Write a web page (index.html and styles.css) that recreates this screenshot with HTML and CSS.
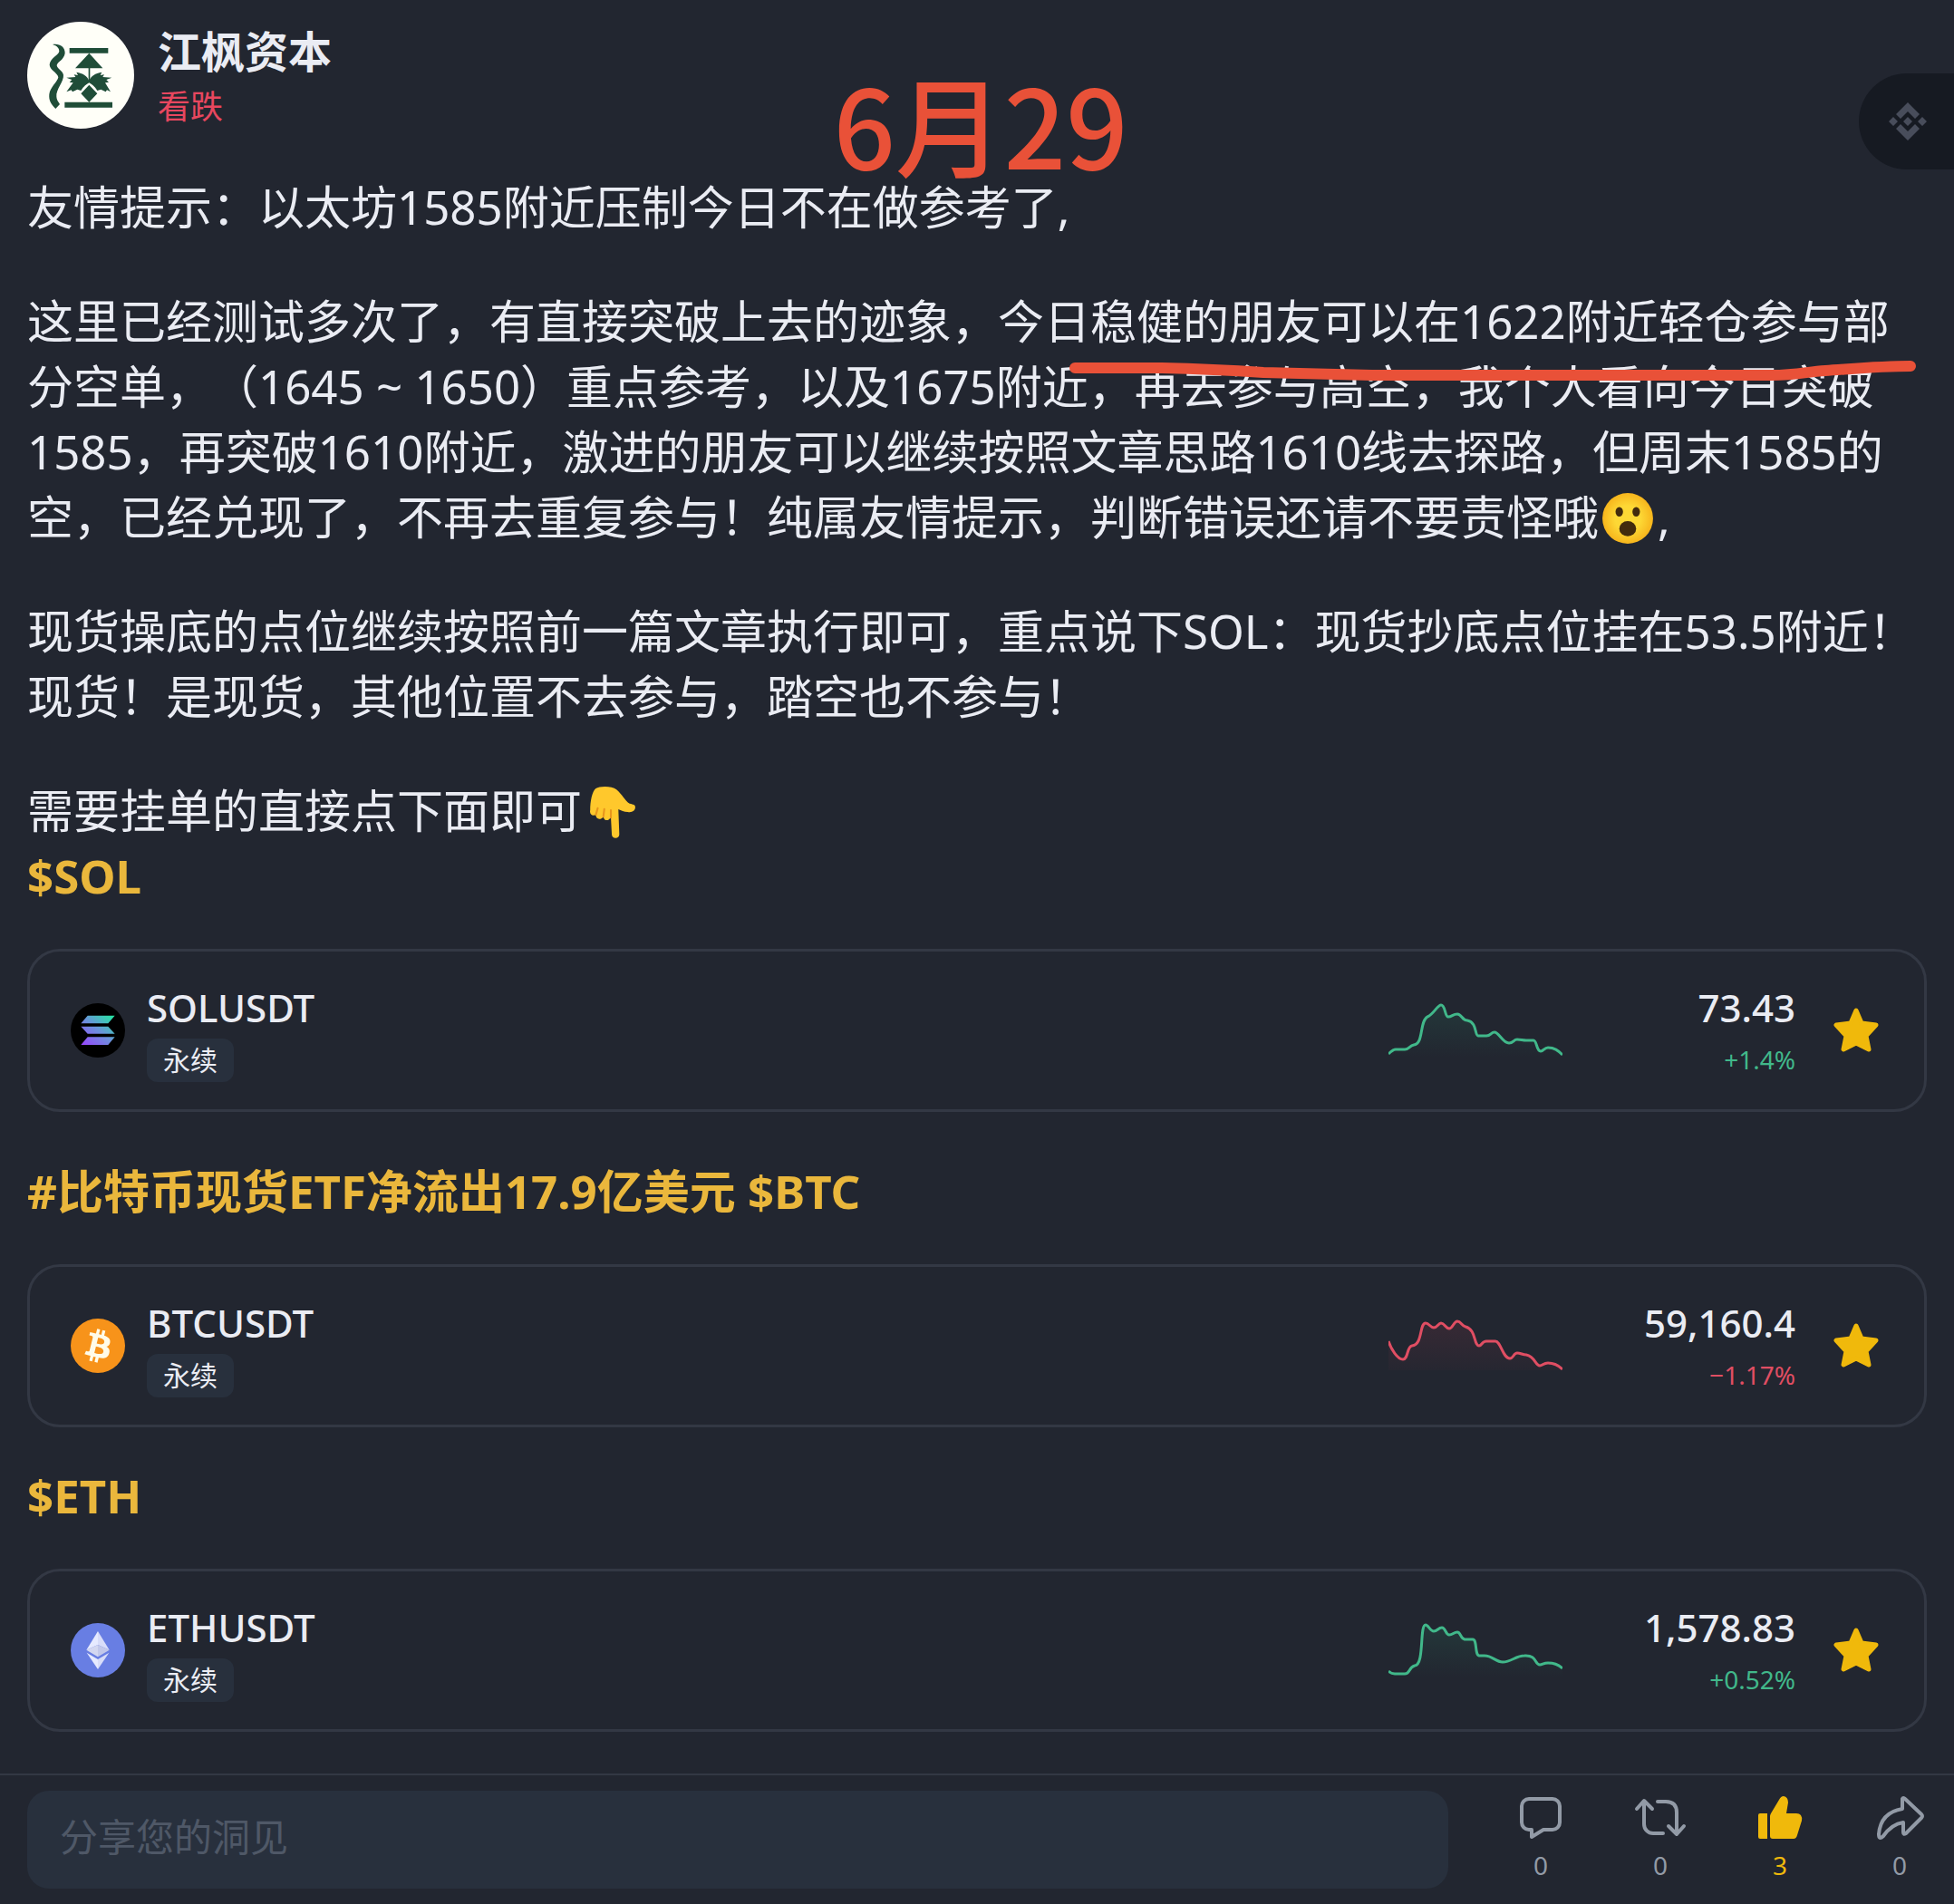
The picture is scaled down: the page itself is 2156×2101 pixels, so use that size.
FILE: index.html
```html
<!DOCTYPE html>
<html lang="zh-CN">
<head>
    <meta charset="UTF-8">
    <meta name="viewport" content="width=device-width, initial-scale=1.0">
    <title>江枫资本</title>
    <link rel="stylesheet" href="styles.css">
</head>
<body>
    <main class="post">
        <header class="author">
            <svg class="avatar" viewBox="0 0 354 354" aria-hidden="true">
                <circle cx="177" cy="177" r="177" fill="#fffff8"/>
                <g fill="#1f4d38">
                    <path d="M84 75C105 71 126 82 125 104C122 126 100 132 98 144C98 155 118 162 120 176C122 198 94 224 97 248C98 262 108 270 108 273L94 288C80 274 71 262 73 240C76 216 100 200 103 184C100 168 74 160 74 142C76 120 104 110 106 98C106 86 98 80 84 75Z"/>
                    <path d="M140 87H268V104H140ZM124 266H282V284H124ZM205 104L250 154H159ZM203 150H208V200H203ZM205 209L232 238L205 266L178 238Z"/>
                    <path d="M205 196C200 180 184 170 163 167L168 177L155 175L160 183L130 185L148 192L140 200L152 202L130 232L146 226L150 232L166 224L178 228C186 214 198 206 205 202C212 206 224 214 232 228L244 224L260 232L264 226L276 232L258 202L270 200L262 192L280 185L250 183L255 175L242 177L247 167C226 170 210 180 205 196Z"/>
                </g>
            </svg>
            <div class="author-info">
                <h1 class="author-name">江枫资本</h1>
                <p class="sentiment">看跌</p>
            </div>
        </header>

        <div class="date-mark">6月29</div>

        <a class="float-button" href="#" aria-label="Binance">
            <svg viewBox="0 0 42 42" aria-hidden="true">
                <path d="M21 0L34 13L29 18L21 10L13 18L8 13ZM21 42L8 29L13 24L21 32L29 24L34 29ZM21 16L26 21L21 26L16 21ZM5 16L10 21L5 26L0 21ZM37 16L42 21L37 26L32 21Z" fill="#484d5b"/>
            </svg>
        </a>

        <div class="post-text">
            <p>友情提示：以太坊1585附近压制今日不在做参考了,</p>
            <div class="marked">
                <p>这里已经测试多次了，有直接突破上去的迹象，今日稳健的朋友可以在1622附近轻仓参与部分空单，（1645 ~ 1650）重点参考，以及1675附近，再去参与高空，我个人看向今日突破1585，再突破1610附近，激进的朋友可以继续按照文章思路1610线去探路，但周末1585的空，已经兑现了，不再去重复参与！纯属友情提示，判断错误还请不要责怪哦<svg class="emoji" viewBox="0 0 56 56" role="img" aria-label="惊讶"><defs><radialGradient id="face"><stop offset="0.5" stop-color="#fdd835"/><stop offset="1" stop-color="#f7b51c"/></radialGradient></defs><circle cx="28" cy="28" r="27" fill="url(#face)"/><ellipse cx="19" cy="21" rx="4" ry="5" fill="#422b0d"/><ellipse cx="37" cy="21" rx="4" ry="5" fill="#422b0d"/><ellipse cx="28" cy="39" rx="9" ry="8" fill="#422b0d"/></svg>,</p>
                <svg class="underline" viewBox="0 0 952 32" aria-hidden="true">
                    <path d="M12 13L108 13C150 14 190 16 220 18L340 21H780C810 21 820 17 840 16C870 14 900 11 934 11" fill="none" stroke="#e95138" stroke-width="12" stroke-linecap="round" stroke-linejoin="round"/>
                </svg>
            </div>
            <p>现货操底的点位继续按照前一篇文章执行即可，重点说下SOL：现货抄底点位挂在53.5附近！现货！是现货，其他位置不去参与，踏空也不参与！</p>
            <p>需要挂单的直接点下面即可<svg class="emoji" viewBox="0 0 56 56" role="img" aria-label="下指"><path d="M12 3C16 0 29 0 34 4C40 9 43 16 48 19C52 20 54 20 54 23C54 27 50 29 46 28C42 28 39 26 36 25L37 52C37 57 29 57 29 52L28 33C26 38 21 38 20 33C17 37 12 36 12 31C8 33 5 30 6 26C6 17 8 6 12 3Z" fill="#ffc82c"/><path d="M12 31L14 24M20 33L21 25M28 34V26" stroke="#e8951c" stroke-width="2" stroke-linecap="round" fill="none"/></svg></p>
        </div>

        <h2 class="tags"><a href="#">$SOL</a></h2>
        <section class="ticker">
            <svg class="coin" viewBox="0 0 180 180" aria-hidden="true">
                <defs>
                    <linearGradient id="sol" gradientUnits="userSpaceOnUse" x1="45" y1="145" x2="135" y2="35">
                        <stop offset="0" stop-color="#9945ff"/>
                        <stop offset="0.5" stop-color="#6c90dc"/>
                        <stop offset="1" stop-color="#24e8a0"/>
                    </linearGradient>
                </defs>
                <circle cx="90" cy="90" r="90" fill="#000"/>
                <path d="M56 41H146L124 67H34ZM34 77H124L146 101H56ZM56 112H146L124 138H34Z" fill="url(#sol)"/>
            </svg>
            <div class="pair">
                <h3 class="pair-name">SOLUSDT</h3>
                <span class="badge">永续</span>
            </div>
            <svg class="chart up" viewBox="0 0 192 60" aria-hidden="true">
                <defs>
                    <linearGradient id="fill-up" x1="0" y1="0" x2="0" y2="1">
                        <stop offset="0" stop-color="#2ebd85" stop-opacity="0.12"/>
                        <stop offset="1" stop-color="#2ebd85" stop-opacity="0"/>
                    </linearGradient>
                </defs>
                <path class="area" fill="url(#fill-up)" d="M0 56C3 53 5 51 8 51H18C23 51 23 47 28 46C39 45 34 20 43 15C50 12 54 2 58 2C63 2 62 15 66 15C70 15 71 12 76 12C81 12 81 19 87 19C98 21 95 36 99 36H108C113 36 113 32 117 32C122 32 126 44 133 44C138 44 138 40 142 40C146 40 148 41 152 41H160C164 41 163 53 168 53C171 53 172 49 176 49C183 49 187 52 192 57V60H0Z"/>
                <path class="line" d="M0 56C3 53 5 51 8 51H18C23 51 23 47 28 46C39 45 34 20 43 15C50 12 54 2 58 2C63 2 62 15 66 15C70 15 71 12 76 12C81 12 81 19 87 19C98 21 95 36 99 36H108C113 36 113 32 117 32C122 32 126 44 133 44C138 44 138 40 142 40C146 40 148 41 152 41H160C164 41 163 53 168 53C171 53 172 49 176 49C183 49 187 52 192 57"/>
            </svg>
            <div class="quote up">
                <span class="price">73.43</span>
                <span class="change">+1.4%</span>
            </div>
            <button class="star" type="button" aria-label="收藏 SOLUSDT">
                <svg viewBox="0 0 50 50" aria-hidden="true"><path d="M25 3L31 17L47 19L36 31L39 46L25 39L11 46L14 31L3 19L19 17Z"/></svg>
            </button>
        </section>

        <h2 class="tags tags-topic"><a href="#">#比特币现货ETF净流出17.9亿美元</a> <a href="#">$BTC</a></h2>
        <section class="ticker">
            <svg class="coin" viewBox="0 0 32 32" aria-hidden="true">
                <circle cx="16" cy="16" r="16" fill="#f7931a"/>
                <path fill="#fffbe8" d="M23.189 14.02c.314-2.096-1.283-3.223-3.465-3.975l.708-2.84-1.728-.43-.69 2.765c-.454-.114-.92-.22-1.385-.326l.695-2.783L15.596 6l-.708 2.839c-.376-.086-.746-.17-1.104-.26l.002-.009-2.384-.595-.46 1.846s1.283.294 1.256.312c.7.175.826.638.805 1.006l-.806 3.235c.048.012.11.03.18.057l-.183-.045-1.13 4.532c-.086.212-.303.531-.793.41.018.025-1.256-.313-1.256-.313l-.858 1.978 2.25.561c.418.105.828.215 1.231.318l-.715 2.872 1.727.43.708-2.84c.472.127.93.245 1.378.357l-.706 2.828 1.728.43.715-2.866c2.948.558 5.164.333 6.097-2.333.752-2.146-.037-3.385-1.588-4.192 1.13-.26 1.98-1.003 2.207-2.538zm-3.95 5.538c-.533 2.147-4.148.986-5.32.695l.95-3.805c1.172.293 4.929.872 4.37 3.11zm.535-5.569c-.487 1.953-3.495.96-4.47.717l.86-3.45c.975.243 4.118.696 3.61 2.733z"/>
            </svg>
            <div class="pair">
                <h3 class="pair-name">BTCUSDT</h3>
                <span class="badge">永续</span>
            </div>
            <svg class="chart down" viewBox="0 0 192 60" aria-hidden="true">
                <defs>
                    <linearGradient id="fill-down" x1="0" y1="0" x2="0" y2="1">
                        <stop offset="0" stop-color="#f6465d" stop-opacity="0.1"/>
                        <stop offset="1" stop-color="#f6465d" stop-opacity="0.02"/>
                    </linearGradient>
                </defs>
                <path class="area" fill="url(#fill-down)" d="M0 25C3 34 10 45 16 45C22 45 20 31 26 30C38 29 34 5 41 5C45 5 46 10 50 10C54 10 55 5 58 5C62 5 63 11 67 11C71 11 72 3 76 3C80 3 81 8 85 9C97 12 94 30 100 30C103 30 103 25 108 25H118C124 25 126 44 134 44C138 44 138 38 142 38C146 38 148 40 152 40C162 42 162 52 167 52C170 52 171 49 176 49C183 49 187 51 192 56V57H0Z"/>
                <path class="line" d="M0 25C3 34 10 45 16 45C22 45 20 31 26 30C38 29 34 5 41 5C45 5 46 10 50 10C54 10 55 5 58 5C62 5 63 11 67 11C71 11 72 3 76 3C80 3 81 8 85 9C97 12 94 30 100 30C103 30 103 25 108 25H118C124 25 126 44 134 44C138 44 138 38 142 38C146 38 148 40 152 40C162 42 162 52 167 52C170 52 171 49 176 49C183 49 187 51 192 56"/>
            </svg>
            <div class="quote down">
                <span class="price">59,160.4</span>
                <span class="change">−1.17%</span>
            </div>
            <button class="star" type="button" aria-label="收藏 BTCUSDT">
                <svg viewBox="0 0 50 50" aria-hidden="true"><path d="M25 3L31 17L47 19L36 31L39 46L25 39L11 46L14 31L3 19L19 17Z"/></svg>
            </button>
        </section>

        <h2 class="tags tags-next"><a href="#">$ETH</a></h2>
        <section class="ticker">
            <svg class="coin" viewBox="0 0 180 180" aria-hidden="true">
                <circle cx="90" cy="90" r="90" fill="#687ee3"/>
                <path d="M90 27L52 89L90 72Z" fill="#e6eaff"/>
                <path d="M90 27L128 89L90 72Z" fill="#d8ddf9"/>
                <path d="M52 89L90 72V112Z" fill="#d3d7f0"/>
                <path d="M128 89L90 72V112Z" fill="#c2c8ea"/>
                <path d="M53 98L90 120V153Z" fill="#e6eaff"/>
                <path d="M127 98L90 120V153Z" fill="#d8ddf9"/>
            </svg>
            <div class="pair">
                <h3 class="pair-name">ETHUSDT</h3>
                <span class="badge">永续</span>
            </div>
            <svg class="chart up" viewBox="0 0 192 60" aria-hidden="true">
                <path class="area" fill="url(#fill-up)" d="M0 53C2 55 4 56 7 56H18C24 56 22 49 29 47C40 46 34 2 41 2C44 2 46 9 50 9C54 9 55 5 59 5C63 5 63 13 67 13C71 13 72 10 76 10C80 10 79 17 84 18H93C98 18 95 35 100 36H106C115 36 118 43 126 43C136 43 140 36 150 36C164 35 161 46 167 46C170 46 171 44 176 44C184 44 188 46 192 50V60H0Z"/>
                <path class="line" d="M0 53C2 55 4 56 7 56H18C24 56 22 49 29 47C40 46 34 2 41 2C44 2 46 9 50 9C54 9 55 5 59 5C63 5 63 13 67 13C71 13 72 10 76 10C80 10 79 17 84 18H93C98 18 95 35 100 36H106C115 36 118 43 126 43C136 43 140 36 150 36C164 35 161 46 167 46C170 46 171 44 176 44C184 44 188 46 192 50"/>
            </svg>
            <div class="quote up">
                <span class="price">1,578.83</span>
                <span class="change">+0.52%</span>
            </div>
            <button class="star" type="button" aria-label="收藏 ETHUSDT">
                <svg viewBox="0 0 50 50" aria-hidden="true"><path d="M25 3L31 17L47 19L36 31L39 46L25 39L11 46L14 31L3 19L19 17Z"/></svg>
            </button>
        </section>
    </main>

    <footer class="toolbar">
        <input class="comment-input" type="text" placeholder="分享您的洞见" aria-label="分享您的洞见">
        <button class="action" type="button" aria-label="评论">
            <svg viewBox="0 0 60 60" aria-hidden="true"><path d="M17 9H43A8 8 0 0 1 51 17V35A8 8 0 0 1 43 43H33L20 51V43H17A8 8 0 0 1 9 35V17A8 8 0 0 1 17 9Z"/></svg>
            <span>0</span>
        </button>
        <button class="action" type="button" aria-label="转发">
            <svg viewBox="0 0 60 60" aria-hidden="true"><path d="M4 20L12 11L21 20M12 12V37A10 10 0 0 0 22 47H33M27 12H36Q48 12 48 24V48M39 39L48 48L56 39"/></svg>
            <span>0</span>
        </button>
        <button class="action liked" type="button" aria-label="点赞">
            <svg viewBox="0 0 60 60" aria-hidden="true"><path d="M8 25H16V53H8Q6 53 6 51V27Q6 25 8 25ZM19 28Q19 27 20 25L29 10Q31 6 34 6Q39 7 39 13L37 25H48Q55 25 54 33L49 49Q48 53 45 53H22Q19 53 19 50Z"/></svg>
            <span>3</span>
        </button>
        <button class="action" type="button" aria-label="分享">
            <svg viewBox="0 0 60 60" aria-hidden="true"><path d="M33 9Q34 7 36 9L54 26Q56 28 54 30L37 47Q34 49 34 46V35Q21 37 12 50Q7 55 7 48Q9 24 33 20Z"/></svg>
            <span>0</span>
        </button>
    </footer>
</body>
</html>
```

FILE: styles.css
```css
* {
    box-sizing: border-box;
}
body {
    margin: 0;
    min-height: 100vh;
    display: flex;
    flex-direction: column;
    background-color: #222630;
    color: #eaecf3;
    font-family: "Noto Sans", "Noto Sans CJK SC", sans-serif;
}
h1, h2, h3, p {
    margin: 0;
}
a {
    color: inherit;
    text-decoration: none;
}
button {
    padding: 0;
    border: none;
    background: none;
    font-family: inherit;
    cursor: pointer;
}
svg {
    display: block;
}

/* post */
.post {
    position: relative;
    flex: 1;
    padding: 24px 30px 44px;
}
.author {
    display: flex;
    gap: 26px;
    margin-bottom: 46px;
}
.avatar {
    width: 118px;
    height: 118px;
}
.author-name {
    font-size: 48px;
    font-weight: 700;
    line-height: 66px;
}
.sentiment {
    font-size: 36px;
    line-height: 56px;
    color: #e8475f;
}
.date-mark {
    position: absolute;
    top: 60px;
    left: 8px;
    right: 0;
    text-align: center;
    font-family: "Noto Sans CJK SC", sans-serif;
    font-size: 120px;
    font-weight: 500;
    line-height: 150px;
    color: #e95138;
    pointer-events: none;
}
.float-button {
    position: absolute;
    top: 81px;
    right: 0;
    display: flex;
    align-items: center;
    padding: 32px 30px 32px 33px;
    border-radius: 53px 0 0 53px;
    background-color: #161a22;
}
.float-button svg {
    width: 42px;
    height: 42px;
}
.post-text {
    display: flex;
    flex-direction: column;
    gap: 54px;
    font-size: 51px;
    line-height: 72px;
    text-spacing-trim: space-all;
}
.emoji {
    display: inline-block;
    width: 58px;
    height: 58px;
    margin: 0 4px 0 3px;
    vertical-align: -11px;
}
.marked {
    position: relative;
}
.underline {
    position: absolute;
    top: 75px;
    right: 0;
    width: 952px;
    height: 32px;
}
.tags {
    margin-bottom: 45px;
    font-size: 51px;
    font-weight: 700;
    line-height: 72px;
    color: #eab73c;
}
.tags-topic {
    margin-top: 51px;
}
.tags-next {
    margin-top: 39px;
}

/* ticker card */
.ticker {
    display: flex;
    align-items: center;
    height: 180px;
    padding: 0 50px 0 45px;
    border: 3px solid #333844;
    border-radius: 36px;
}
.coin {
    width: 60px;
    height: 60px;
    margin-right: 24px;
}
.pair {
    flex: 1;
    display: flex;
    flex-direction: column;
    align-items: flex-start;
    gap: 2px;
}
.pair-name {
    font-size: 42px;
    font-weight: 500;
    line-height: 64px;
}
.badge {
    padding: 0 18px;
    border-radius: 12px;
    background-color: #28303d;
    font-size: 30px;
    line-height: 48px;
}
.chart {
    width: 192px;
    height: 60px;
}
.chart .line {
    fill: none;
    stroke: currentColor;
    stroke-width: 3;
}
.up {
    color: #41b88a;
}
.down {
    color: #e04e63;
}
.quote {
    width: 257px;
    display: flex;
    flex-direction: column;
    align-items: flex-end;
}
.price {
    font-size: 42px;
    font-weight: 500;
    line-height: 64px;
    color: #eaecf3;
}
.change {
    font-size: 28px;
    line-height: 50px;
}
.star {
    margin-left: 42px;
}
.star svg {
    width: 50px;
    height: 50px;
    fill: #f0b90b;
    stroke: #f0b90b;
    stroke-width: 5;
    stroke-linejoin: round;
}

/* bottom bar */
.toolbar {
    display: flex;
    align-items: flex-start;
    gap: 72px;
    padding: 17px 30px;
    border-top: 2px solid #333844;
}
.comment-input {
    flex: 1;
    min-width: 0;
    height: 108px;
    padding: 0 36px 8px;
    border: none;
    border-radius: 24px;
    background-color: #28303d;
    color: #eaecf3;
    font-family: inherit;
    font-size: 42px;
}
.comment-input::placeholder {
    color: #4f5867;
}
.action {
    width: 60px;
    font-size: 28px;
    line-height: 44px;
    color: #929aa6;
}
.action span {
    display: block;
}
.action svg {
    width: 60px;
    height: 60px;
    fill: none;
    stroke: currentColor;
    stroke-width: 4;
    stroke-linecap: round;
    stroke-linejoin: round;
}
.liked {
    color: #f0b90b;
}
.liked svg {
    fill: currentColor;
    stroke: none;
}
```
